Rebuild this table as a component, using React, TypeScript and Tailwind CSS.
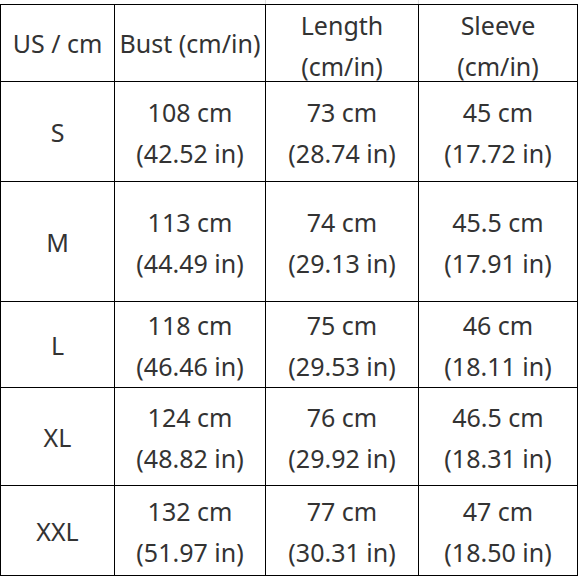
const HEAD = ["US / cm", "Bust (cm/in)", "Length\n(cm/in)", "Sleeve\n(cm/in)"];

const ROWS: { size: string; cells: [string, string][] }[] = [
  { size: "S", cells: [["108 cm", "(42.52 in)"], ["73 cm", "(28.74 in)"], ["45 cm", "(17.72 in)"]] },
  { size: "M", cells: [["113 cm", "(44.49 in)"], ["74 cm", "(29.13 in)"], ["45.5 cm", "(17.91 in)"]] },
  { size: "L", cells: [["118 cm", "(46.46 in)"], ["75 cm", "(29.53 in)"], ["46 cm", "(18.11 in)"]] },
  { size: "XL", cells: [["124 cm", "(48.82 in)"], ["76 cm", "(29.92 in)"], ["46.5 cm", "(18.31 in)"]] },
  { size: "XXL", cells: [["132 cm", "(51.97 in)"], ["77 cm", "(30.31 in)"], ["47 cm", "(18.50 in)"]] },
];

const cell =
  "flex items-center justify-center text-center whitespace-pre-line border-r-[1.5px] border-b-[1.5px] border-black min-h-0";

export default function App() {
  return (
    <div className="w-[578px] h-[577px] bg-white overflow-hidden text-[#333] text-[25px] leading-[41px] font-['Noto_Sans','Open_Sans',sans-serif]">
      {/* faint lines above the table */}
      <div className="flex h-[4px]">
        <div className="w-[265px]" />
        <div className="w-[153px] border-l border-[#ddd]" />
        <div className="flex-1 border-l border-[#ddd]" />
      </div>
      <div className="grid grid-cols-[114px_151px_153px_159px] grid-rows-[77px_100px_120px_86px_98px_90px] border-t-[1.5px] border-l-[1.5px] border-black w-[578px]">
        {HEAD.map((t) => (
          <div key={t} className={`${cell} ${t.includes("\n") ? "pt-[6px]" : ""}`}>
            {t}
          </div>
        ))}
        {ROWS.map((r) => [
          <div key={r.size} className={`${cell} pt-[2px]`}>
            {r.size}
          </div>,
          ...r.cells.map(([cm, inch]) => (
            <div key={r.size + cm + inch} className={`${cell} pt-[2px]`}>
              {cm + "\n" + inch}
            </div>
          )),
        ])}
      </div>
    </div>
  );
}
